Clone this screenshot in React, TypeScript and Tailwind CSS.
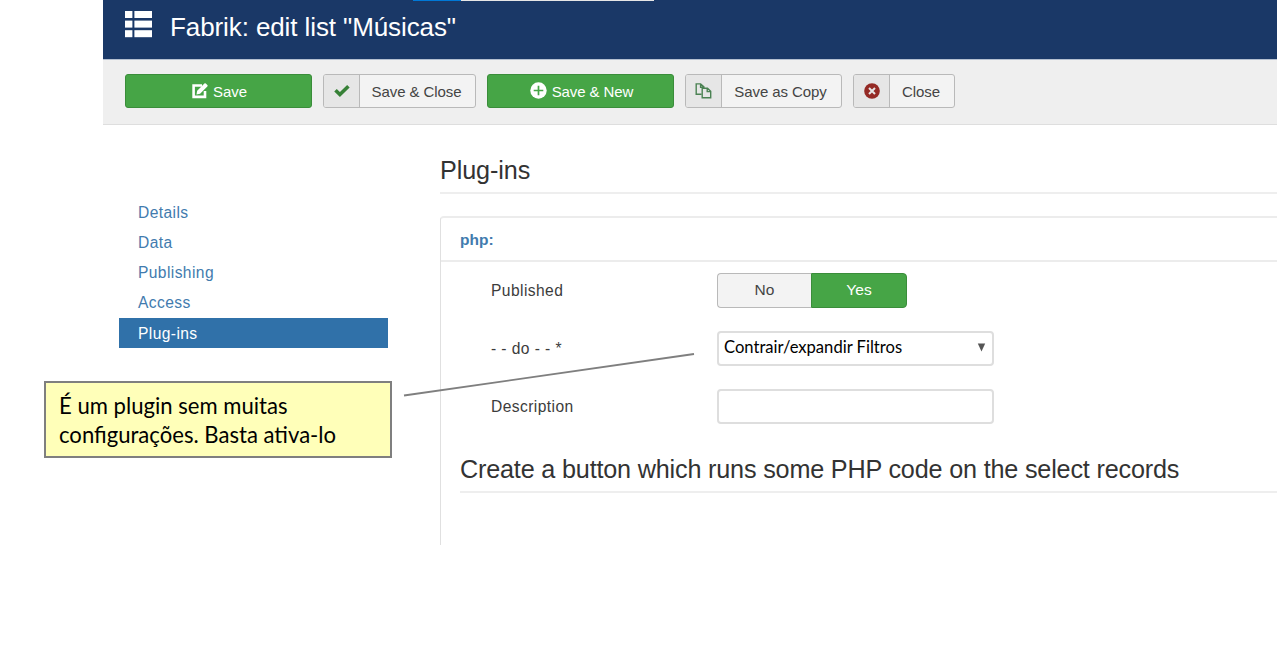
import React from "react";

const navItems = ["Details", "Data", "Publishing", "Access", "Plug-ins"];

function ListIcon() {
  return (
    <svg width="27" height="27" viewBox="0 0 27 27" fill="#fff">
      {[0, 9.6, 19.2].map((y) => (
        <g key={y}>
          <rect x="0" y={y} width="7.4" height="7" />
          <rect x="9.4" y={y} width="17.6" height="7" />
        </g>
      ))}
    </svg>
  );
}

function EditIcon() {
  return (
    <svg width="16" height="16" viewBox="0 0 16 16">
      <path d="M10 2.5H1.6v11.4H13V8" fill="none" stroke="#fff" strokeWidth="2.6" />
      <path d="M4.5 11.5l.7-3.7L12.4.6a1 1 0 0 1 1.4 0l1.5 1.5a1 1 0 0 1 0 1.4L8.1 10.8z" fill="#fff" />
    </svg>
  );
}

function CheckIcon() {
  return (
    <svg width="16" height="14" viewBox="0 0 16 14">
      <path d="M1.5 6.2l4.4 4.3L14.4 2.2" fill="none" stroke="#378137" strokeWidth="3.6" />
    </svg>
  );
}

function PlusIcon() {
  return (
    <svg width="17" height="17" viewBox="0 0 17 17">
      <circle cx="8.5" cy="8.5" r="8.2" fill="#fff" />
      <path d="M8.5 3.7v9.6M3.7 8.5h9.6" stroke="#46a546" strokeWidth="1.7" />
    </svg>
  );
}

function CopyIcon() {
  return (
    <svg width="17" height="16" viewBox="0 0 17 16" fill="none" stroke="#4b8253" strokeWidth="1.4">
      <path d="M6.6 11.3H1.2V.9h4.4l3.3 3v1.8M5.6.9v3.3h3.3" />
      <path d="M10.6 5.3H7.2v9.4h8.5V8.3l-3.2-3h-1.9M12.2 5.3v3.3h3.5" />
    </svg>
  );
}

function CancelIcon() {
  return (
    <svg width="16" height="16" viewBox="0 0 16 16">
      <circle cx="8" cy="8" r="7.8" fill="#942a25" />
      <path d="M5 5l6 6M11 5l-6 6" stroke="#e6e6e6" strokeWidth="2" />
    </svg>
  );
}

function PrimaryButton({ icon, children }: { icon: React.ReactNode; children: React.ReactNode }) {
  return (
    <button className="flex h-[34px] w-[187px] items-center justify-center gap-[5px] rounded-[3px] border border-[#3a8d3a] bg-[#46a546] pl-[2px] text-[15px] tracking-[-0.08px] text-white">
      <span className="pb-px">{icon}</span>
      <span className="pt-[2px]">{children}</span>
    </button>
  );
}

function ToolButton({ icon, width, children }: { icon: React.ReactNode; width: string; children: React.ReactNode }) {
  return (
    <button className={"flex h-[34px] rounded-[3px] border border-[#b9b9b9] bg-[#f3f3f3] text-[15px] tracking-[-0.08px] text-[#444] " + width}>
      <span className="flex h-full w-[36px] items-center justify-center rounded-l-[2px] border-r border-[#b9b9b9] bg-[#e6e6e6] pb-px">
        {icon}
      </span>
      <span className="flex h-full flex-1 items-center justify-center pr-[2px] pt-[2px]">{children}</span>
    </button>
  );
}

function Row({ label, children }: { label: string; children: React.ReactNode }) {
  return (
    <div className="flex h-[36px] items-center">
      <div className="w-[226px] whitespace-pre pt-px text-[15.6px] tracking-[0.42px] text-[#3c3c3c]">{label}</div>
      {children}
    </div>
  );
}

export default function App() {
  return (
    <div className="relative h-[648px] w-full overflow-hidden bg-white font-['Liberation_Sans',Arial,sans-serif]">
      <div className="ml-[103px] h-[545px] overflow-hidden">
        <header className="h-[60px] border-b border-[#b4bfd0] bg-[#1a3867]">
          <div className="flex h-[59px] items-center pb-[6px] pl-[22px]">
            <div className="mb-[4px]"><ListIcon /></div>
            <h1 className="ml-[18px] whitespace-nowrap text-[26px] leading-none tracking-[-0.1px] text-white">
              Fabrik: edit list "Músicas"
            </h1>
          </div>
        </header>
        <div className="flex h-[65px] items-start border-b border-[#dedede] bg-[#efefef] pl-[22px] pt-[14px]">
          <div className="flex gap-[11px]">
            <PrimaryButton icon={<EditIcon />}>Save</PrimaryButton>
            <ToolButton icon={<CheckIcon />} width="w-[153px]">Save &amp; Close</ToolButton>
            <PrimaryButton icon={<PlusIcon />}>Save &amp; New</PrimaryButton>
            <ToolButton icon={<CopyIcon />} width="w-[157px]">Save as Copy</ToolButton>
            <ToolButton icon={<CancelIcon />} width="w-[102px]">Close</ToolButton>
          </div>
        </div>
        <div className="flex">
          <nav className="w-[337px] shrink-0 pl-[16px] pt-[72px]">
            {navItems.map((item) => (
              <a
                key={item}
                className={
                  "flex h-[30.2px] w-[269px] items-center pl-[19px] pt-px text-[15.6px] tracking-[0.4px] " +
                  (item === "Plug-ins" ? "bg-[#3071a9] text-white" : "text-[#427bae]")
                }
              >
                {item}
              </a>
            ))}
          </nav>
          <main className="min-w-0 flex-1">
            <h2 className="h-[69px] whitespace-nowrap border-b-2 border-[#eee] pt-[30px] text-[25.2px] leading-[30px] tracking-[-0.1px] text-[#333]">Plug-ins</h2>
            <section className="mt-[22px] h-[360px] rounded-tl-[4px] border-l border-t-2 border-l-[#e0e0e0] border-t-[#ececec]">
              <div className="flex h-[44px] items-center border-b-2 border-[#ececec] pl-[19px] pt-px text-[15.5px] font-bold text-[#427bae]">php:</div>
              <div className="flex flex-col gap-[22px] pl-[50px] pt-[10px]">
                <Row label="Published">
                  <div className="flex h-[35px] w-[190px] text-[15.5px]">
                    <button className="w-[94px] rounded-l-[4px] border border-r-0 border-[#b9b9b9] bg-[#f3f3f3] text-[#444]">No</button>
                    <button className="w-[96px] rounded-r-[4px] border border-[#3a8d3a] bg-[#46a546] text-white">Yes</button>
                  </div>
                </Row>
                <Row label={"- - do - - *"}>
                  <div className="flex h-[35px] w-[277px] items-center justify-between rounded-[4px] border-2 border-[#dedede] pb-[2px] pl-[5px] pr-[6px]">
                    <span className="whitespace-nowrap font-['Lato','Noto_Sans',sans-serif] text-[16.6px] text-black">Contrair/expandir Filtros</span>
                    <svg width="9" height="9" viewBox="0 0 9 9"><path d="M.8.5h7.4L4.5 8.5z" fill="#555" /></svg>
                  </div>
                </Row>
                <Row label="Description">
                  <input aria-label="Description" className="h-[35px] w-[277px] rounded-[4px] border-2 border-[#dedede] bg-white" />
                </Row>
              </div>
              <h3 className="ml-[19px] mt-[30px] h-[39px] whitespace-nowrap border-b-2 border-[#eee] text-[25.2px] leading-[30px] tracking-[-0.18px] text-[#333]">
                Create a button which runs some PHP code on the select records
              </h3>
            </section>
          </main>
        </div>
      </div>
      <div className="absolute left-[413px] top-0 flex h-px w-[241px] bg-[#e6e6e6]">
        <div className="h-px w-[48px] bg-[#0078d7]" />
      </div>
      <svg className="absolute left-[400px] top-[345px]" width="300" height="56" viewBox="0 0 300 56">
        <path d="M4 50.5L294 9" stroke="#7f7f7f" strokeWidth="1.8" />
      </svg>
      <aside className="absolute left-[44px] top-[381px] h-[77px] w-[348px] whitespace-nowrap border-2 border-[#7f7f7f] bg-[#ffffb9] pl-[13px] pt-[8px] font-['Lato','Noto_Sans',sans-serif] text-[22.1px] leading-[29px] text-black">
        É um plugin sem muitas
        <br />
        configurações. Basta ativa-lo
      </aside>
    </div>
  );
}
